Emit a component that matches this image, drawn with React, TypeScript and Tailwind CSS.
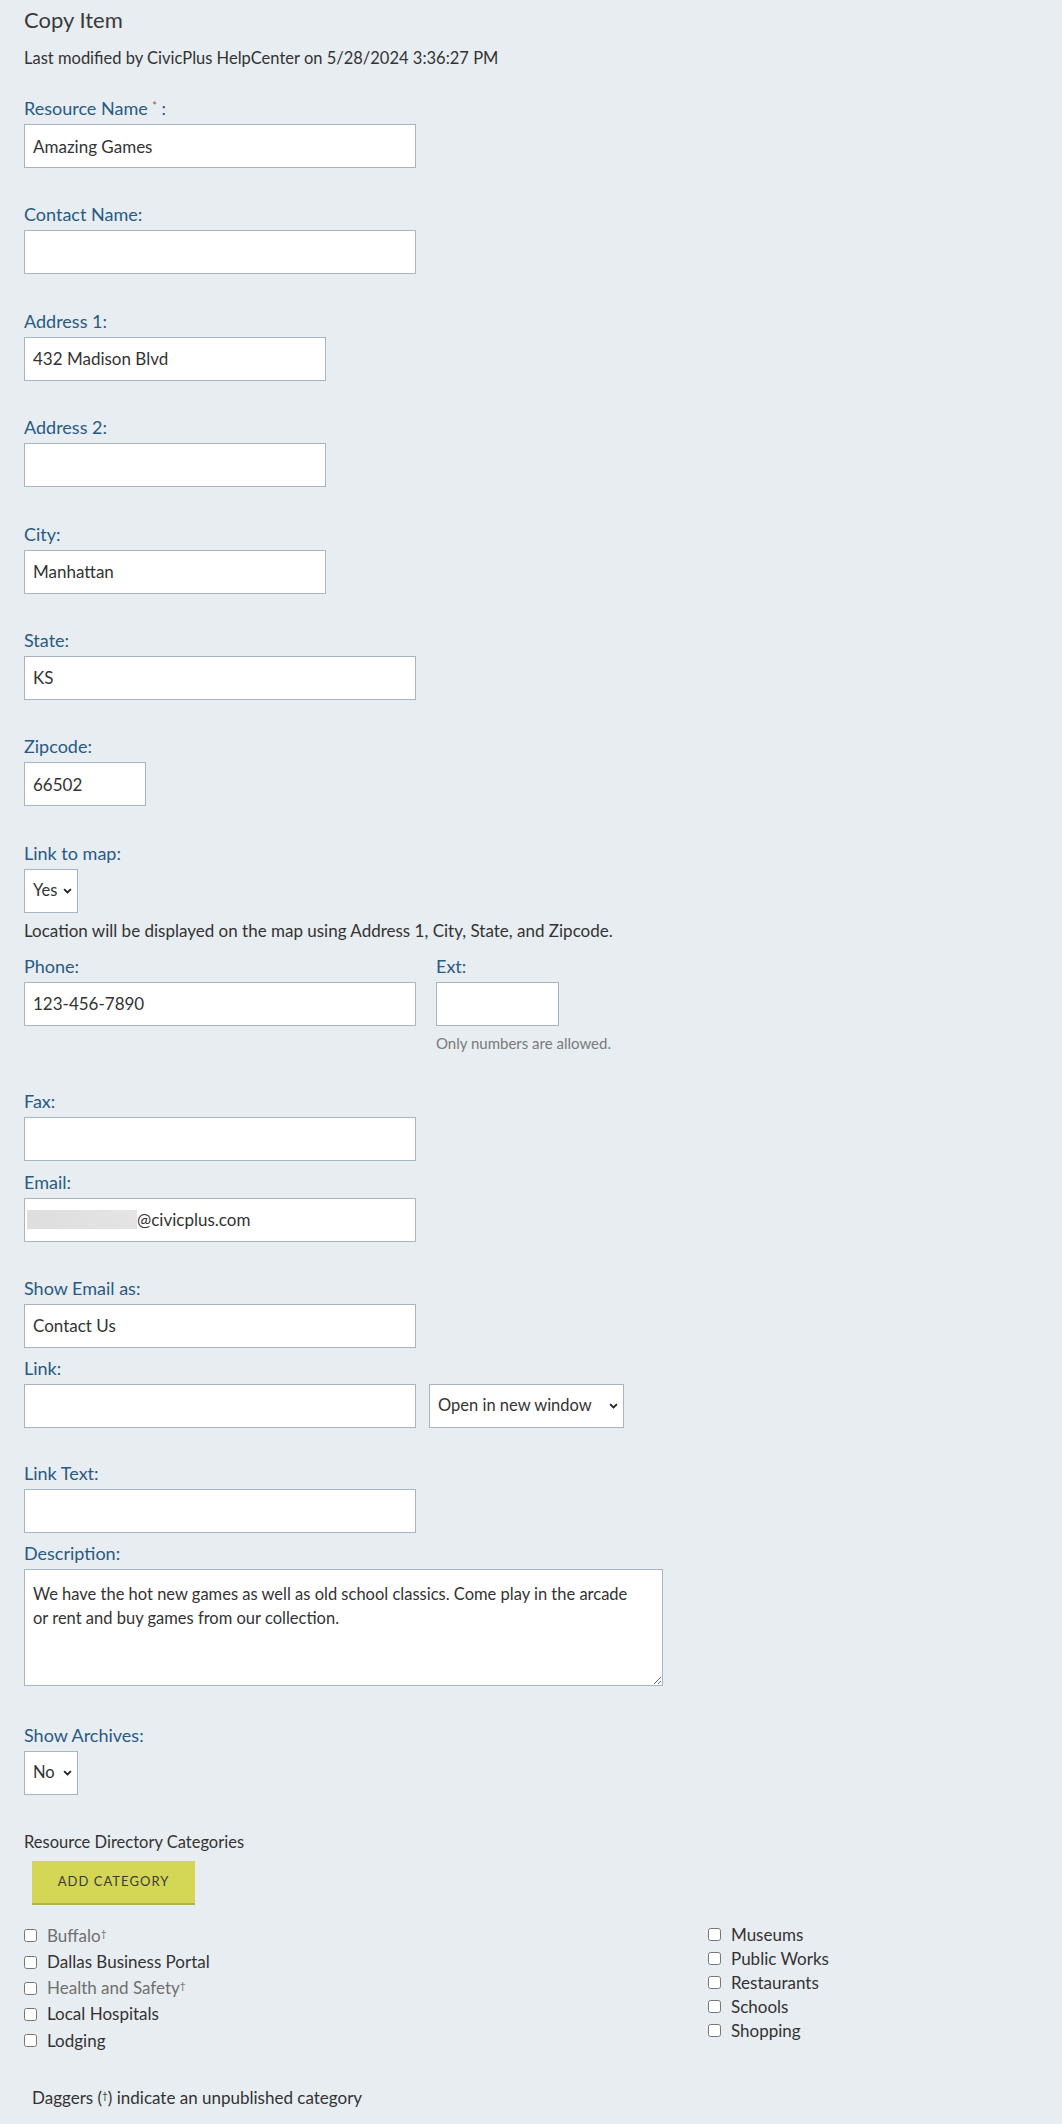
import React from "react";

const labelCls = "block text-[18px] leading-6 text-[#285a84] mb-1";
const inputCls =
  "block h-[44px] border border-[#a9b4c2] bg-white px-2 text-[17px] text-[#333] outline-none";

function Field({
  label,
  width,
  value = "",
  className = "",
}: {
  label: React.ReactNode;
  width: string;
  value?: string;
  className?: string;
}) {
  return (
    <div className={className}>
      <label className={labelCls}>{label}</label>
      <input type="text" defaultValue={value} className={`${inputCls} ${width}`} />
    </div>
  );
}

function Select({ options, width }: { options: string[]; width: string }) {
  return (
    <div className={`relative ${width}`}>
      <select
        defaultValue={options[0]}
        className="block h-[44px] w-full appearance-none border border-[#a9b4c2] bg-white pl-2 pr-5 text-[16.5px] text-[#333] outline-none"
      >
        {options.map((o) => (
          <option key={o}>{o}</option>
        ))}
      </select>
      <svg
        viewBox="0 0 10 7"
        className="pointer-events-none absolute right-[6px] top-1/2 h-[6px] w-[9px] -translate-y-1/2"
      >
        <path d="M1 1.2 L5 5.2 L9 1.2" fill="none" stroke="#222" strokeWidth="2" />
      </svg>
    </div>
  );
}

const leftCategories = [
  { name: "Buffalo", unpublished: true },
  { name: "Dallas Business Portal", unpublished: false },
  { name: "Health and Safety", unpublished: true },
  { name: "Local Hospitals", unpublished: false },
  { name: "Lodging", unpublished: false },
];

const rightCategories = ["Museums", "Public Works", "Restaurants", "Schools", "Shopping"];

export default function App() {
  return (
    <div className="min-h-[2124px] bg-[#e8edf1] px-6 pt-[6px] font-['Lato',sans-serif] text-[#333]">
      <h1 className="text-[22px] leading-7 text-[#3a3a3a]">Copy Item</h1>
      <p className="mt-[14px] text-[16.5px] leading-5">
        Last modified by CivicPlus HelpCenter on 5/28/2024 3:36:27 PM
      </p>

      <div className="mt-7">
        <Field
          label={
            <>
              Resource Name <sup className="text-[11px] text-[#b04a4a]">*</sup> :
            </>
          }
          width="w-[392px]"
          value="Amazing Games"
          className="mb-[34.4px]"
        />
        <Field label="Contact Name:" width="w-[392px]" className="mb-[34.4px]" />
        <Field label="Address 1:" width="w-[302px]" value="432 Madison Blvd" className="mb-[34.4px]" />
        <Field label="Address 2:" width="w-[302px]" className="mb-[34.4px]" />
        <Field label="City:" width="w-[302px]" value="Manhattan" className="mb-[34.4px]" />
        <Field label="State:" width="w-[392px]" value="KS" className="mb-[34.4px]" />
        <Field label="Zipcode:" width="w-[122px]" value="66502" className="mb-[34.4px]" />

        {/* Link to map */}
        <div>
          <label className={labelCls}>Link to map:</label>
          <Select options={["Yes", "No"]} width="w-[54px]" />
          <p className="mt-2 text-[17px] leading-5">
            Location will be displayed on the map using Address 1, City, State, and Zipcode.
          </p>
        </div>

        {/* Phone + Ext */}
        <div className="mt-[13px] flex gap-5">
          <div>
            <label className={labelCls}>Phone:</label>
            <input type="text" defaultValue="123-456-7890" className={`${inputCls} w-[392px]`} />
          </div>
          <div>
            <label className={labelCls}>Ext:</label>
            <input type="text" className={`${inputCls} w-[123px]`} />
            <p className="mt-2 text-[15px] leading-[18px] text-[#7a7a7a]">Only numbers are allowed.</p>
          </div>
        </div>

        <Field label="Fax:" width="w-[392px]" className="mt-[37px] mb-[9px]" />

        {/* Email */}
        <div className="mb-[34px]">
          <label className={labelCls}>Email:</label>
          <div className={`${inputCls} w-[392px] flex items-center !px-0`}>
            <span className="ml-[2px] h-[19px] w-[110px] bg-gradient-to-r from-[#dedede] to-[#e4e4e4]" />
            <span>@civicplus.com</span>
          </div>
        </div>

        <Field label="Show Email as:" width="w-[392px]" value="Contact Us" className="mb-2" />

        {/* Link */}
        <div className="mb-[33px]">
          <label className={labelCls}>Link:</label>
          <div className="flex gap-[13px]">
            <input type="text" className={`${inputCls} w-[392px]`} />
            <Select options={["Open in new window", "Open in same window"]} width="w-[195px]" />
          </div>
        </div>

        <Field label="Link Text:" width="w-[392px]" className="mb-2" />

        {/* Description */}
        <div className="mb-[37px]">
          <label className={labelCls}>Description:</label>
          <textarea
            defaultValue={
              "We have the hot new games as well as old school classics. Come play in the arcade\nor rent and buy games from our collection."
            }
            className="block h-[117px] w-[639px] border border-[#a9b4c2] bg-white px-2 pt-3 text-[16.5px] leading-[24.5px] text-[#333] outline-none"
          />
        </div>

        {/* Show Archives */}
        <div>
          <label className={labelCls}>Show Archives:</label>
          <Select options={["No", "Yes"]} width="w-[54px]" />
        </div>

        {/* Categories */}
        <p className="mt-[37px] text-[16.5px] leading-5">Resource Directory Categories</p>
        <button
          type="button"
          className="ml-2 mt-[9px] h-[44px] w-[163px] border-b-2 border-[#b3b444] bg-[#d4d655] text-[13px] uppercase tracking-[0.08em] text-[#3b3b3b]"
        >
          Add Category
        </button>

        <div className="mt-[18px] grid grid-cols-[684px_1fr]">
          <ul>
            {leftCategories.map((c) => (
              <li key={c.name} className="flex h-[26.2px] items-center gap-[10px]">
                <input type="checkbox" className="m-0 h-[13px] w-[13px]" />
                <span className={`text-[17px] leading-5 ${c.unpublished ? "text-[#6f6f6f]" : "text-[#333]"}`}>
                  {c.name}
                  {c.unpublished && <sup className="text-[10px]">†</sup>}
                </span>
              </li>
            ))}
          </ul>
          <ul>
            {rightCategories.map((name) => (
              <li key={name} className="flex h-[24px] items-center gap-[10px]">
                <input type="checkbox" className="m-0 h-[13px] w-[13px]" />
                <span className="text-[17px] leading-5 text-[#333]">{name}</span>
              </li>
            ))}
          </ul>
        </div>

        <p className="ml-2 mt-[34px] text-[17px] leading-5">
          Daggers (<sup className="text-[10px]">†</sup>) indicate an unpublished category
        </p>
      </div>
    </div>
  );
}
